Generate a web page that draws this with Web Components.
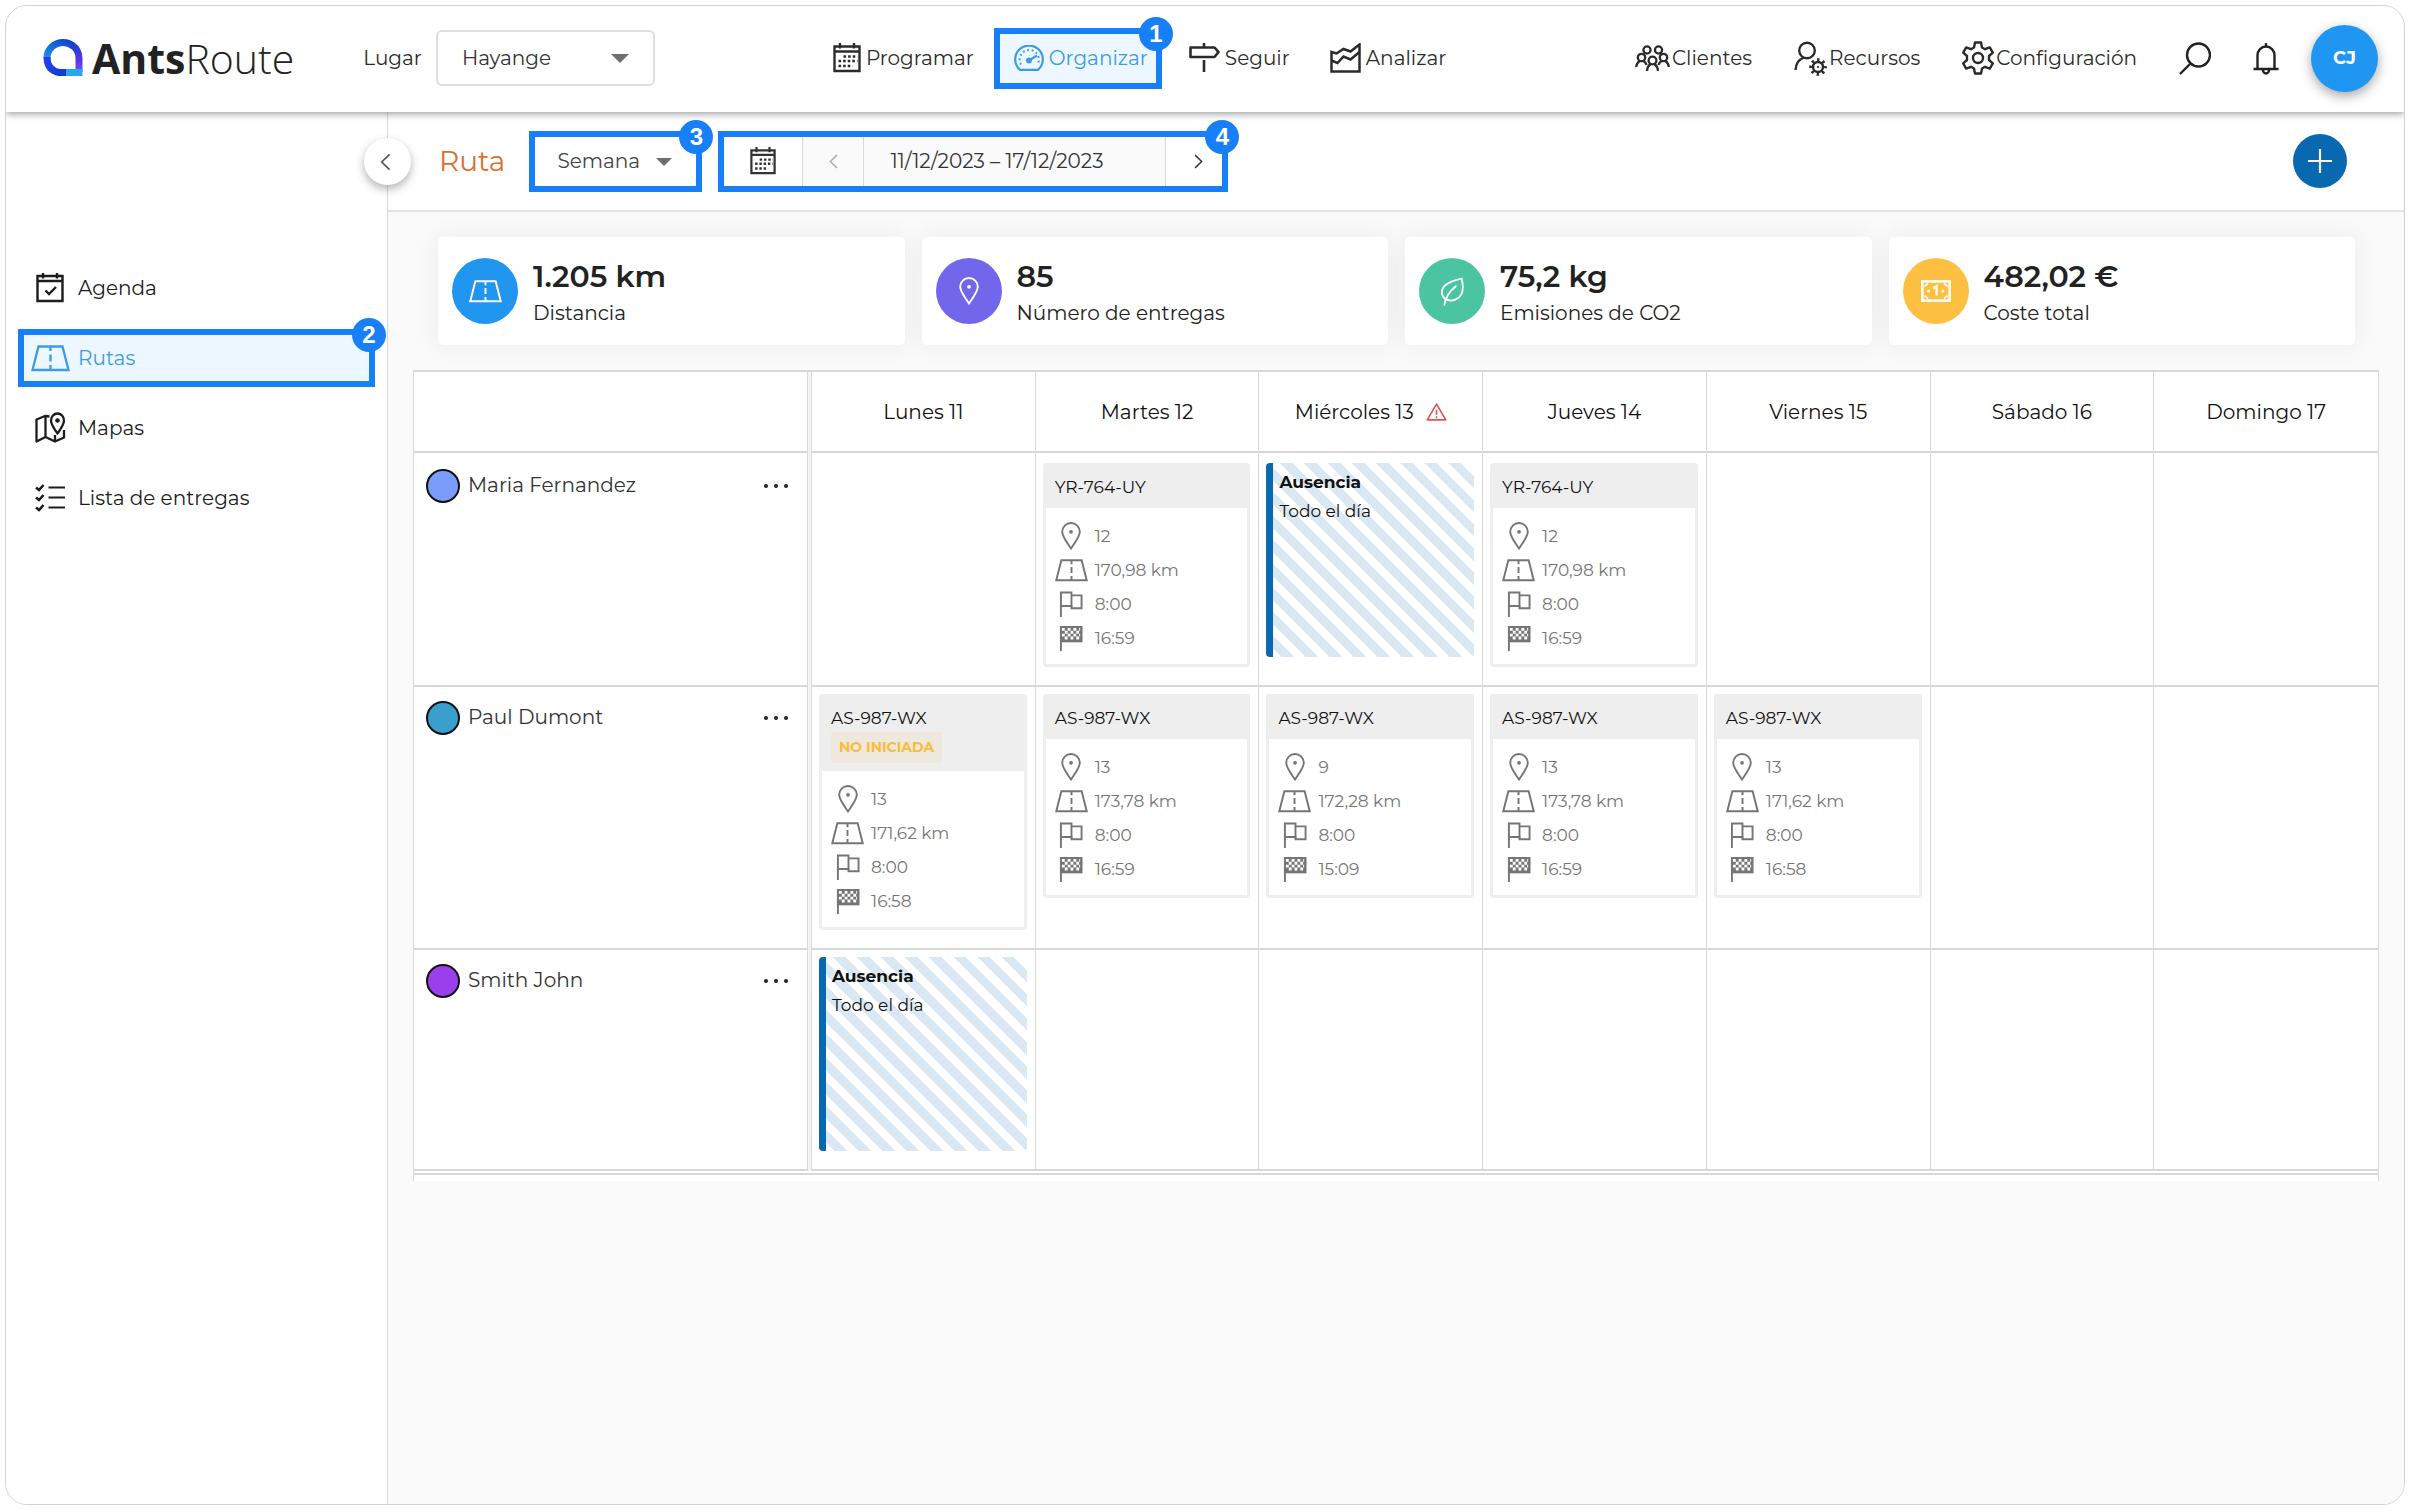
<!DOCTYPE html>
<html lang="es">
<head>
<meta charset="utf-8">
<meta name="viewport" content="width=device-width, initial-scale=1">
<title>AntsRoute – Rutas</title>
<style>
  html, body { margin: 0; background: #fff; }
  body {
    font-family: Montserrat, Inter, "Open Sans", sans-serif;
    font-size: 20px; line-height: 28px; color: #222;
    --line: #d8d8d8; --mark: #177ff8; --active: #3d9be2; --primary: #0869ae;
  }
</style>
</head>
<body>
<ar-app></ar-app>

<script>
const ICONS = {
  calendar: ['0 0 28 30', `<g fill="none" stroke="currentColor" stroke-width="2.4"><path d="M1.5 3.5h25v24.500h-25zM1.500 8.500h25"/><path d="M7 0v5.500M21 0v5.500"/></g><path d="M10.500 13.500h14M5.500 18h19M5.500 23h14" stroke="currentColor" stroke-width="2.600" stroke-dasharray="2.600 2" fill="none"/>`],
  gauge: ['0 0 30 26', `<path d="M6 24.800A13.800 13.800 0 1 1 24 24.800z" fill="none" stroke="currentColor" stroke-width="2.200" stroke-linejoin="round"/><path d="M7 19.500A9.600 9.600 0 1 1 23.500 19.500" fill="none" stroke="currentColor" stroke-width="2" stroke-dasharray="1.800 2.700"/><circle cx="15" cy="15.500" r="2.900" fill="currentColor"/><path d="M15 15.500l8-5" stroke="currentColor" stroke-width="2.200"/>`],
  sign: ['0 0 31 30', `<g fill="none" stroke="currentColor" stroke-width="2.600"><path d="M1.500 4.500h24l4 4.700-4 4.800h-24z" stroke-linejoin="round"/><path d="M15 0v4M15 17v12"/></g>`],
  chart: ['0 0 31 30', `<g fill="none" stroke="currentColor" stroke-width="2.500"><path d="M1.500 28.500V9l5 1.500 7-4.500 7 2.500 9-7v27z"/><path d="M1.500 17.500l6 2.500 6-6.500 7 3 9-7.500"/></g>`],
  group: ['0 0 35 26', `<g fill="none" stroke="currentColor" stroke-width="2.300"><circle cx="12" cy="5" r="3.600"/><circle cx="23.500" cy="5" r="3.600"/><circle cx="6.500" cy="12.500" r="3.700"/><circle cx="28.500" cy="12.500" r="3.700"/><circle cx="17.500" cy="15.500" r="3.900"/><path d="M1.200 22q.3-4 3.500-6M8.500 16q2.500 1.500 3 4M33.800 22q-.3-4-3.500-6M26.500 16q-2.500 1.500-3 4M12 26q.3-4.500 3.500-7M23 26q-.3-4.500-3.500-7"/></g>`],
  resource: ['0 0 33 35', `<g fill="none" stroke="currentColor" stroke-width="2.400"><circle cx="13" cy="9.500" r="7.800"/><path d="M1.500 29q.5-9.500 8.500-12.500"/><circle cx="24" cy="26" r="5"/></g><circle cx="24" cy="26" r="7.300" fill="none" stroke="currentColor" stroke-width="3" stroke-dasharray="2.500 3.230" stroke-dashoffset="1.200"/><circle cx="24" cy="26" r="1.100" fill="currentColor"/>`],
  gear: ['0 0 32 34', `<g fill="none" stroke="currentColor" stroke-width="2.400" stroke-linejoin="round"><circle cx="16" cy="17" r="5"/><path d="M13 1.500h6l1 5 3 1.700 4.800-1.800 3 5.200-3.800 3.400v4l3.800 3.400-3 5.200-4.800-1.800-3 1.700-1 5h-6l-1-5-3-1.700-4.800 1.800-3-5.200L5 19v-4L1.200 11.600l3-5.200L9 8.200l3-1.700z"/></g>`],
  search: ['0 0 32 33', `<g fill="none" stroke="currentColor" stroke-width="2.400"><circle cx="19.500" cy="13" r="11.500"/><path d="M11.500 21.500L1 32"/></g>`],
  bell: ['0 0 26 33', `<g fill="none" stroke="currentColor" stroke-width="2.400"><path d="M4.500 26.500V13.500a8.500 9 0 0 1 17 0v13"/><path d="M.5 27h25M13 1v3.500"/><path d="M10 28a3 3.500 0 0 0 6 0"/></g>`],
  agenda: ['0 0 28 30', `<g fill="none" stroke="currentColor" stroke-width="2.400"><path d="M1.500 3h25v25h-25zM1.500 8h25"/><path d="M7 0v5.500M21 0v5.500M9.500 17.500l3.500 3.500 7-7"/></g>`],
  road: ['0 0 39 27', `<g fill="none" stroke="currentColor" stroke-width="2.300"><path d="M7.500 1.500h24L37.500 25h-36z" /><path d="M19.500 2v4M19.500 9.500v7M19.500 20v5" /></g>`],
  map: ['0 0 31 32', `<g fill="none" stroke="currentColor" stroke-width="2.300" stroke-linejoin="round"><path d="M14.500 4.500L10 4 1.500 7.500v22l9-4.500 9.500 4.500 9-4V18M10.500 4v21M20 29.500V23"/><path d="M22.500 21.500c-4-5.500-6.500-9-6.500-13a6.500 7 0 0 1 13 0c0 4-2.500 7.500-6.500 13z"/></g><circle cx="22.500" cy="8.500" r="2.300" fill="currentColor"/>`],
  checks: ['0 0 30 28', `<g fill="none" stroke="currentColor"><path stroke-width="2.200" d="M13.500 3.500H30M13.500 13.500H30M13.500 23.500H30"/><path stroke-width="2.600" d="M1 3.500l3 2.500 4.500-5M1 13.500l3 2.500 4.500-5M1 23.500l3 2.500 4.500-5"/></g>`],
  pin: ['0 0 20 28', `<path d="M10 26.500C5 19 1.200 14.500 1.200 9.800a8.800 8.800 0 0 1 17.600 0C18.800 14.500 15 19 10 26.500z" fill="none" stroke="currentColor" stroke-width="1.900"/><circle cx="10" cy="9.800" r="1.900" fill="currentColor"/>`],
  flag: ['0 0 25 27', `<g fill="none" stroke="currentColor" stroke-width="2"><path d="M2 27V1.500h11v14H2"/><path d="M13 4.500h10.500v13.500H13v-3"/></g>`],
  finish: ['0 0 25 27', `<path d="M2 27V1" stroke="currentColor" stroke-width="2"/><path d="M1 1h23.500v17H1z" fill="currentColor"/><path d="M3 4.500h19M3 10.500h19" stroke="#fff" stroke-width="3" stroke-dasharray="3 3"/><path d="M6 7.500h17M6 13.500h17" stroke="#fff" stroke-width="3" stroke-dasharray="3 3"/>`],
  leaf: ['0 0 26 30', `<g fill="none" stroke="currentColor" stroke-width="1.900" stroke-linecap="round"><path d="M22.500 1.500C13 3.500 2 7 2 15.500c0 4 2 6.500 4.500 8 7 2.500 13-.5 16-6 1.500-4 1.500-10 0-16z"/><path d="M16.500 9.500C10.500 14 6 20 4.500 29"/></g>`],
  money: ['0 0 26 19', `<rect x="1.200" y="1.200" width="23.600" height="16.600" fill="none" stroke="currentColor" stroke-width="2.200"/><path d="M3 5.500L6 3M20 3l3 2.500M3 13.500L6 16M20 16l3-2.500" stroke="currentColor" stroke-width="1.600"/><path d="M10.500 7l3-1.500v8" fill="none" stroke="currentColor" stroke-width="2"/><circle cx="6.500" cy="9.500" r="1.300" fill="currentColor"/><circle cx="19" cy="9.500" r="1.300" fill="currentColor"/>`],
  warning: ['0 0 22 19', `<g fill="none" stroke="currentColor" stroke-width="1.700" stroke-linejoin="round"><path d="M11 1.200L20.800 17.800H1.200z"/><path d="M11 7v5.500M11 14v2"/></g>`],
  left: ['0 0 12 20', `<path d="M10.500 1.500L1.800 10l8.700 8.500" fill="none" stroke="currentColor" stroke-width="1.900"/>`],
  right: ['0 0 12 20', `<path d="M1.500 1.500L10.200 10l-8.700 8.500" fill="none" stroke="currentColor" stroke-width="1.900"/>`],
  plus: ['0 0 24 24', `<path d="M12 0v24M0 12h24" stroke="currentColor" stroke-width="2.200"/>`],
  dots: ['0 0 26 6', `<g fill="currentColor"><circle cx="3" cy="3" r="2"/><circle cx="13" cy="3" r="2"/><circle cx="23" cy="3" r="2"/></g>`]
};

const define = (name, html) => customElements.define(name, class extends HTMLElement {
  connectedCallback() {
    if (this.shadowRoot) return;
    const t = document.createElement('template');
    t.innerHTML = `<style>*{box-sizing:border-box}</style>` + (typeof html === 'function' ? html(this) : html);
    this.attachShadow({ mode: 'open' }).append(t.content.cloneNode(true));
  }
});
const attr = (el, n) => el.getAttribute(n) || '';

define('ar-icon', el => {
  const [box, body] = ICONS[attr(el, 'name')];
  const [, , w, h] = box.split(' ').map(Number);
  const width = Number(attr(el, 'w')) || w;
  return `<style>:host{display:inline-flex;flex:none;align-items:center;justify-content:center}svg{display:block}</style>
  <svg width="${width}" height="${Math.round(width * h / w)}" viewBox="${box}" aria-hidden="true">${body}</svg>`;
});

/* Numbered frame drawn round a highlighted control */
define('ar-mark', el => `<style>
  :host{display:block;position:relative;border:6px solid var(--mark);background:var(--fill,#fff)}
  .n{position:absolute;top:-17px;right:-17px;width:34px;height:34px;border-radius:50%;background:var(--mark);color:#fff;
     font:bold 24px/34px "Liberation Sans",sans-serif;text-align:center}
</style><slot></slot><span class="n">${attr(el, 'n')}</span>`);

define('ar-logo', `<style>
  :host{display:flex;align-items:center;gap:9px;font:300 41px/52px "Open Sans",sans-serif;color:#222}
  svg{display:block} b{font-weight:700}
  span{display:block}
</style>
<svg width="40" height="40" viewBox="0 0 40 40" aria-hidden="true">
  <defs>
    <linearGradient id="a" x1="0" y1="1" x2="1" y2="0"><stop offset="0" stop-color="#1593f5"/><stop offset=".6" stop-color="#1161dc"/><stop offset="1" stop-color="#1340c8"/></linearGradient>
    <linearGradient id="b" x1="0" y1="0" x2="0" y2="1"><stop offset="0" stop-color="#1b3fd0"/><stop offset=".6" stop-color="#5b36e8"/><stop offset="1" stop-color="#6b59f0"/></linearGradient>
    <linearGradient id="c" x1="0" y1="0" x2="1" y2="1"><stop offset="0" stop-color="#2a3ee6"/><stop offset="1" stop-color="#0a3fd6"/></linearGradient>
  </defs>
  <g fill="none" stroke-width="7">
    <path d="M4 20A16 15.500 0 0 1 20 4.500q6 0 10 3.500" stroke="url(#a)"/>
    <path d="M29 7q7 5 7 13v14" stroke="url(#b)"/>
    <path d="M4 19q0 13 12 15.500h10" stroke="url(#c)"/>
    <path d="M23 34.500h16.500" stroke="#28a5f3"/>
  </g>
</svg><span><b>Ants</b>Route</span>`);

define('ar-nav-link', el => `<style>
  :host{display:block} a{display:flex;align-items:center;gap:var(--gap,5px);color:inherit;text-decoration:none;white-space:nowrap}
</style><a href="#"><ar-icon name="${attr(el, 'icon')}"></ar-icon><slot></slot></a>`);

define('ar-header', `<style>
  :host{display:flex;align-items:center;height:106px;padding:0 26px 2px 37px;background:#fff;box-shadow:0 2px 7px rgba(0,0,0,.38);position:relative;z-index:2;color:#2b2b2b}
  ar-logo{margin-right:69px}
  .place{display:flex;align-items:center;gap:14px;margin-right:158px}
  .pick{display:flex;position:relative;align-items:center}
  select{appearance:none;font:inherit;color:#333;background:#fff;border:2px solid #dedede;border-radius:6px;width:219px;height:56px;padding:0 24px}
  .pick::after{content:"";position:absolute;right:26px;border:9px solid transparent;border-top-color:#6f6f6f;border-bottom:0;pointer-events:none}
  nav{display:flex;align-items:center}
  nav ar-nav-link{padding:0 20px}
  nav ar-mark{--fill:#edf7ff;color:var(--active);height:61px;display:flex;align-items:center;margin-right:7px}
  nav ar-mark ar-nav-link{padding:0 8px 0 14px}
  .tools{display:flex;align-items:center;gap:42px;margin-left:auto}
  .tools ar-nav-link{--gap:2px}
  button{font:inherit;border:0;background:none;padding:0;color:#222;display:flex;align-items:center;justify-content:center}
  .avatar{width:67px;height:67px;border-radius:50%;background:#2096f3;color:#fff;font-weight:700;font-size:18px;box-shadow:0 4px 12px rgba(0,0,0,.35)}
  .end{display:flex;align-items:center;gap:32px}
</style>
<ar-logo></ar-logo>
<div class="place"><label for="place">Lugar</label><span class="pick"><select id="place"><option>Hayange</option></select></span></div>
<nav>
  <ar-nav-link icon="calendar">Programar</ar-nav-link>
  <ar-mark n="1"><ar-nav-link icon="gauge">Organizar</ar-nav-link></ar-mark>
  <ar-nav-link icon="sign">Seguir</ar-nav-link>
  <ar-nav-link icon="chart">Analizar</ar-nav-link>
</nav>
<div class="tools">
  <ar-nav-link icon="group">Clientes</ar-nav-link>
  <ar-nav-link icon="resource">Recursos</ar-nav-link>
  <ar-nav-link icon="gear">Configuración</ar-nav-link>
  <button aria-label="Buscar"><ar-icon name="search"></ar-icon></button>
  <span class="end"><button aria-label="Notificaciones"><ar-icon name="bell"></ar-icon></button><button class="avatar">CJ</button></span>
</div>`);

define('ar-sidebar', `<style>
  :host{display:block;position:relative;width:382px;flex:none;border-right:1px solid var(--line);background:#fff;padding:147px 12px 0;color:#1c1c1c}
  nav{display:flex;flex-direction:column;gap:12px}
  .item{display:flex;align-items:center;height:58px;padding-left:12px}
  ar-mark{height:58px;--fill:#edf7ff;color:var(--active)}
  ar-mark .item{height:46px;padding-left:6px}
  a{display:flex;align-items:center;gap:8px;color:inherit;text-decoration:none}
  a ar-icon{width:40px}
  .fold{position:absolute;right:-24px;top:26px;width:47px;height:47px;border:0;border-radius:50%;background:#fff;color:#555;box-shadow:0 4px 10px rgba(0,0,0,.3);display:flex;align-items:center;justify-content:center;padding:0 4px 0 0;z-index:1}
</style>
<button class="fold" aria-label="Plegar menú"><ar-icon name="left" w="11"></ar-icon></button>
<nav>
  <div class="item"><a href="#"><ar-icon name="agenda"></ar-icon>Agenda</a></div>
  <ar-mark n="2"><div class="item"><a href="#" aria-current="page"><ar-icon name="road"></ar-icon>Rutas</a></div></ar-mark>
  <div class="item"><a href="#"><ar-icon name="map"></ar-icon>Mapas</a></div>
  <div class="item"><a href="#"><ar-icon name="checks"></ar-icon>Lista de entregas</a></div>
</nav>`);

define('ar-toolbar', `<style>
  :host{display:flex;align-items:center;height:100px;padding:0 57px 0 51px;border-bottom:2px solid #e2e2e2;background:#fff}
  h1{margin:0 24px 0 0;font-size:28px;line-height:36px;font-weight:400;color:#d9712e}
  ar-mark{height:61px;display:flex;align-items:stretch}
  .period{width:173px;margin-right:16px}
  .dates{width:510px}
  select{appearance:none;font:inherit;color:#444;background:transparent;border:0;padding:0 22px;width:100%}
  .period::after{content:"";position:absolute;right:24px;top:21px;border:8px solid transparent;border-top-color:#6f6f6f;border-bottom:0;pointer-events:none}
  button{font:inherit;color:#333;border:0;background:#fff;padding:0;display:flex;align-items:center;justify-content:center}
  .cal{width:78px}.prev{width:62px;background:#fafafa;color:#aaa;border-left:1px solid var(--line);border-right:1px solid var(--line)}
  .range{flex:1;background:#fafafa;border-right:1px solid var(--line);justify-content:flex-start;padding-left:26px}
  .next{width:56px;padding-left:8px}
  .add{margin-left:auto;width:54px;height:54px;border-radius:50%;background:#0869b0;color:#fff}
</style>
<h1>Ruta</h1>
<ar-mark class="period" n="3"><select aria-label="Periodo"><option>Semana</option></select></ar-mark>
<ar-mark class="dates" n="4">
  <button class="cal" aria-label="Calendario"><ar-icon name="calendar" w="26"></ar-icon></button>
  <button class="prev" aria-label="Anterior"><ar-icon name="left" w="9"></ar-icon></button>
  <button class="range">11/12/2023 – 17/12/2023</button>
  <button class="next" aria-label="Siguiente"><ar-icon name="right" w="9"></ar-icon></button>
</ar-mark>
<button class="add" aria-label="Añadir"><ar-icon name="plus"></ar-icon></button>`);

define('ar-stat', el => `<style>
  :host{display:flex;align-items:center;gap:15px;flex:1;height:108px;padding:0 14px;background:#fff;border-radius:5px;box-shadow:0 0 26px rgba(40,40,90,.07)}
  .disc{width:66px;height:66px;border-radius:50%;display:flex;align-items:center;justify-content:center;color:#fff;background:${attr(el, 'color')}}
  .text{display:flex;flex-direction:column;padding-top:4px}
  strong{font-size:30px;line-height:40px;font-weight:600} span{line-height:32px}
</style>
<div class="disc"><ar-icon name="${attr(el, 'icon')}" w="${attr(el, 'w')}"></ar-icon></div>
<div class="text"><strong>${attr(el, 'value')}</strong><span><slot></slot></span></div>`);

define('ar-route', el => {
  const [plate, stops, km, start, end, status] = attr(el, 'data').split('|');
  const row = (i, w, t) => `<li><ar-icon name="${i}" w="${w}"></ar-icon>${t}</li>`;
  return `<style>
  :host{display:block;border-radius:4px;background:#fff;border:3px solid #eee;border-top:0;font-size:17px;line-height:24px}
  header{background:#eee;border-radius:4px 4px 0 0;margin:0 -3px;padding:12px 12px 9px;color:#111}
  .status{display:block;width:fit-content;margin:2px 0 -1px;padding:0 8px;background:#efe9dd;color:#fbbc3d;font-size:14px;line-height:31px;font-weight:700;border-radius:3px}
  ul{list-style:none;margin:0;padding:11px 9px 9px;color:#757575}
  li{display:flex;align-items:center;gap:7px;height:34px} li ar-icon{width:33px}
</style>
<header>${plate}${status ? `<span class="status">${status}</span>` : ''}</header>
<ul>${row('pin', 20, stops)}${row('road', 33, km)}${row('flag', 24, start)}${row('finish', 24, end)}</ul>`;
});

define('ar-absence', `<style>
  :host{display:block;height:194px;border-left:7px solid var(--primary);border-radius:4px;padding:5px 6px;color:#111;font-size:17px;line-height:29px;
    background:repeating-linear-gradient(45deg,#fff 0 6px,#dae8f3 6px 15px,#fff 15px 17px) padding-box}
  strong,span{display:block} strong{font-weight:700}
</style><strong>Ausencia</strong><span>Todo el día</span>`);

define('ar-schedule', () => {
  const days = ['Lunes 11', 'Martes 12', 'Miércoles 13', 'Jueves 14', 'Viernes 15', 'Sábado 16', 'Domingo 17'];
  const R = d => `<ar-route data="${d}"></ar-route>`, A = '<ar-absence></ar-absence>';
  const rows = [
    ['Maria Fernandez', '#7a9dfb', ['', R('YR-764-UY|12|170,98 km|8:00|16:59'), A, R('YR-764-UY|12|170,98 km|8:00|16:59'), '', '', '']],
    ['Paul Dumont', '#3a9fca', [R('AS-987-WX|13|171,62 km|8:00|16:58|NO INICIADA'), R('AS-987-WX|13|173,78 km|8:00|16:59'), R('AS-987-WX|9|172,28 km|8:00|15:09'), R('AS-987-WX|13|173,78 km|8:00|16:59'), R('AS-987-WX|13|171,62 km|8:00|16:58'), '', '']],
    ['Smith John', '#9a40ea', [A, '', '', '', '', '', '']]
  ];
  return `<style>
  :host{display:block}
  table{width:100%;table-layout:fixed;border-collapse:separate;border-spacing:0;background:#fff;border:1px solid var(--line);border-top-width:2px;border-bottom:0}
  .who{width:394px} .gap{width:4px}
  th{font-weight:400;text-align:center;color:#111}
  thead th{height:81px}
  th,td{padding:0;border-bottom:2px solid var(--line);border-right:1px solid var(--line)}
  th:last-child,td:last-child{border-right:0}
  td{vertical-align:top;padding:7px 8px 18px 7px}
  tbody th{vertical-align:top;text-align:left;padding:14px 18px 0 13px;color:#333}
  tbody tr:first-child>*{padding-top:10px}
  tbody tr:first-child>th{padding-top:16px}
  .gap-cell{padding:0!important;background:#f3f3f3;border-bottom:0}
  .name{display:flex;align-items:center;gap:8px;height:34px}
  .name span{padding-bottom:3px}
  .dot{width:34px;height:34px;border-radius:50%;border:2px solid #111;flex:none;margin-left:-1px}
  button{margin-left:auto;border:0;background:none;padding:4px 0;display:flex;color:#222}
  .day{display:flex;align-items:center;justify-content:center;gap:12px} .day ar-icon{color:#e05252}
  tfoot td{height:4px;padding:0;border-right:0}
  .tail{height:6px;background:#fff;border-left:1px solid var(--line);border-right:1px solid var(--line)}
</style>
<table>
  <colgroup><col class="who"><col class="gap"><col span="7"></colgroup>
  <thead><tr><th></th><th class="gap-cell"></th>${days.map((d, i) => `<th scope="col"><div class="day">${d}${i === 2 ? '<ar-icon name="warning" w="21"></ar-icon>' : ''}</div></th>`).join('')}</tr></thead>
  <tbody>${rows.map(([n, c, cells]) => `<tr><th scope="row"><div class="name"><i class="dot" style="background:${c}"></i><span>${n}</span><button aria-label="Más opciones"><ar-icon name="dots"></ar-icon></button></div></th><td class="gap-cell"></td>${cells.map(x => `<td>${x}</td>`).join('')}</tr>`).join('')}</tbody>
  <tfoot><tr><td colspan="9"></td></tr></tfoot>
</table><div class="tail"></div>`;
});

define('ar-app', `<style>
  :host{display:flex;flex-direction:column;margin:5px;min-height:calc(100vh - 10px);border:1px solid #d2d2d2;border-radius:22px;overflow:hidden;background:#fff;box-sizing:border-box}
  .body{display:flex;flex:1} main{flex:1;min-width:0;background:#fafafa;display:flex;flex-direction:column}
  .stats{display:flex;gap:17px;padding:25px 49px 25px 50px}
  ar-schedule{margin:0 25px}
</style>
<ar-header></ar-header>
<div class="body">
  <ar-sidebar></ar-sidebar>
  <main>
    <ar-toolbar></ar-toolbar>
    <div class="stats">
      <ar-stat icon="road" w="33" color="#2196f0" value="1.205 km">Distancia</ar-stat>
      <ar-stat icon="pin" w="20" color="#7266ea" value="85">Número de entregas</ar-stat>
      <ar-stat icon="leaf" w="25" color="#4bc4a1" value="75,2 kg">Emisiones de CO2</ar-stat>
      <ar-stat icon="money" w="30" color="#fdc040" value="482,02 €">Coste total</ar-stat>
    </div>
    <ar-schedule></ar-schedule>
  </main>
</div>`);
</script>
</body>
</html>
